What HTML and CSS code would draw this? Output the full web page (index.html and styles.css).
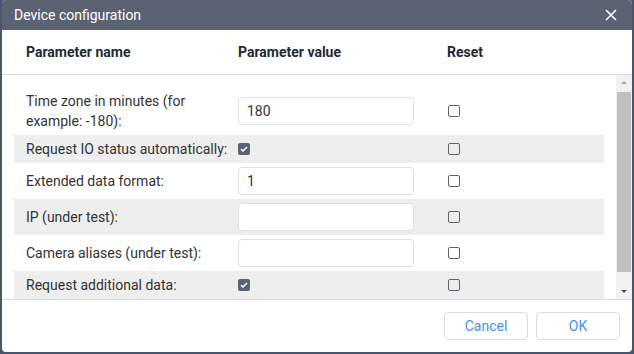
FILE: index.html
```html
<!DOCTYPE html>
<html lang="en">
<head>
    <meta charset="UTF-8">
    <title>Device configuration</title>
    <link rel="stylesheet" href="styles.css">
</head>
<body>
    <div class="dialog">
        <div class="dialog-title">
            <span>Device configuration</span>
            <svg class="close-icon" width="12" height="12" viewBox="0 0 12 12">
                <path d="M1 1 L11 11 M11 1 L1 11" stroke="#ffffff" stroke-width="1.6" fill="none"/>
            </svg>
        </div>
        <div class="param-head">
            <div>Parameter name</div>
            <div>Parameter value</div>
            <div>Reset</div>
        </div>
        <div class="param-body">
            <div class="param-list">
                <div class="param-row">
                    <div class="param-name">Time zone in minutes (for example: -180):</div>
                    <div><input class="param-input" type="text" value="180"></div>
                    <div><span class="check"></span></div>
                </div>
                <div class="param-row odd">
                    <div class="param-name">Request IO status automatically:</div>
                    <div><span class="check checked"><svg width="12" height="12" viewBox="0 0 12 12"><path d="M3 6.2 L5 8 L9 4" stroke="#ffffff" stroke-width="1.6" fill="none"/></svg></span></div>
                    <div><span class="check"></span></div>
                </div>
                <div class="param-row">
                    <div class="param-name">Extended data format:</div>
                    <div><input class="param-input" type="text" value="1"></div>
                    <div><span class="check"></span></div>
                </div>
                <div class="param-row odd">
                    <div class="param-name">IP (under test):</div>
                    <div><input class="param-input" type="text" value=""></div>
                    <div><span class="check"></span></div>
                </div>
                <div class="param-row">
                    <div class="param-name">Camera aliases (under test):</div>
                    <div><input class="param-input" type="text" value=""></div>
                    <div><span class="check"></span></div>
                </div>
                <div class="param-row odd">
                    <div class="param-name">Request additional data:</div>
                    <div><span class="check checked"><svg width="12" height="12" viewBox="0 0 12 12"><path d="M3 6.2 L5 8 L9 4" stroke="#ffffff" stroke-width="1.6" fill="none"/></svg></span></div>
                    <div><span class="check"></span></div>
                </div>
            </div>
            <!-- scrollbars are hidden in the renderer, so this one is drawn by hand -->
            <div class="scrollbar">
                <svg class="scroll-arrow" width="16" height="15" viewBox="0 0 16 15">
                    <path d="M5 9 L11 9 L8 6 Z" fill="#a3a3a3"/>
                </svg>
                <div class="scroll-thumb"></div>
                <svg class="scroll-arrow" width="16" height="15" viewBox="0 0 16 15">
                    <path d="M5 6 L11 6 L8 9 Z" fill="#505050"/>
                </svg>
            </div>
        </div>
        <div class="dialog-footer">
            <button class="btn">Cancel</button>
            <button class="btn">OK</button>
        </div>
    </div>
</body>
</html>
```

FILE: styles.css
```css
body {
    margin: 0;
    background: #4a566b;
    font-family: Roboto, "Liberation Sans", sans-serif;
    font-size: 14px;
    color: #333333;
}

.dialog {
    width: 630px;
    height: 352px;
    margin: 0 2px;
    background: #ffffff;
    border-radius: 4px;
    overflow: hidden;
    display: flex;
    flex-direction: column;
}

.dialog-title {
    height: 30px;
    flex: none;
    display: flex;
    align-items: center;
    justify-content: space-between;
    padding: 0 15px 0 12px;
    background: #5b6272;
    color: #ffffff;
}

.close-icon {
    display: block;
}

.param-head {
    height: 44px;
    flex: none;
    display: grid;
    grid-template-columns: 212px 209px 1fr;
    align-items: center;
    padding-left: 24px;
    border-bottom: 1px solid #d9d9d9;
    font-weight: 700;
    color: #222a33;
}

.param-body {
    height: 224px;
    flex: none;
    display: flex;
    border-bottom: 1px solid #d9d9d9;
}

.param-list {
    flex: 1;
    overflow: hidden;
    padding: 12px 12px 0;
}

.param-row {
    display: grid;
    grid-template-columns: 212px 209px 1fr;
    align-items: center;
    padding: 4px 0 4px 12px;
    line-height: 20px;
}

.param-row.odd {
    background: #eeeeee;
}

.param-name {
    padding-right: 6px;
}

.param-input {
    display: block;
    width: 176px;
    height: 28px;
    box-sizing: border-box;
    border: 1px solid #e0e0e0;
    border-radius: 4px;
    padding: 0 8px;
    font-family: Roboto, "Liberation Sans", sans-serif;
    font-size: 14px;
    color: #333333;
    background: #ffffff;
    outline: none;
}

.check {
    display: block;
    width: 12px;
    height: 12px;
    box-sizing: border-box;
    border: 1.5px solid #5b6272;
    border-radius: 2px;
    margin-left: 1px;
}

.check.checked {
    background: #5b6272;
    border: none;
    margin-left: 0;
}

.check svg {
    display: block;
}

.scrollbar {
    width: 16px;
    flex: none;
    display: flex;
    flex-direction: column;
    background: #f1f1f1;
}

.scroll-arrow {
    display: block;
    flex: none;
}

.scroll-thumb {
    flex: 1;
    margin: 2px 1px 12px 1px;
    background: #c1c1c1;
}

.dialog-footer {
    flex: 1;
    display: flex;
    justify-content: flex-end;
    align-items: flex-start;
    gap: 8px;
    padding: 12px 12px 0;
}

.btn {
    width: 84px;
    height: 28px;
    border: 1px solid #dcdcdc;
    border-radius: 4px;
    background: #ffffff;
    color: #4a8fe7;
    font-family: Roboto, "Liberation Sans", sans-serif;
    font-size: 14px;
}
```
